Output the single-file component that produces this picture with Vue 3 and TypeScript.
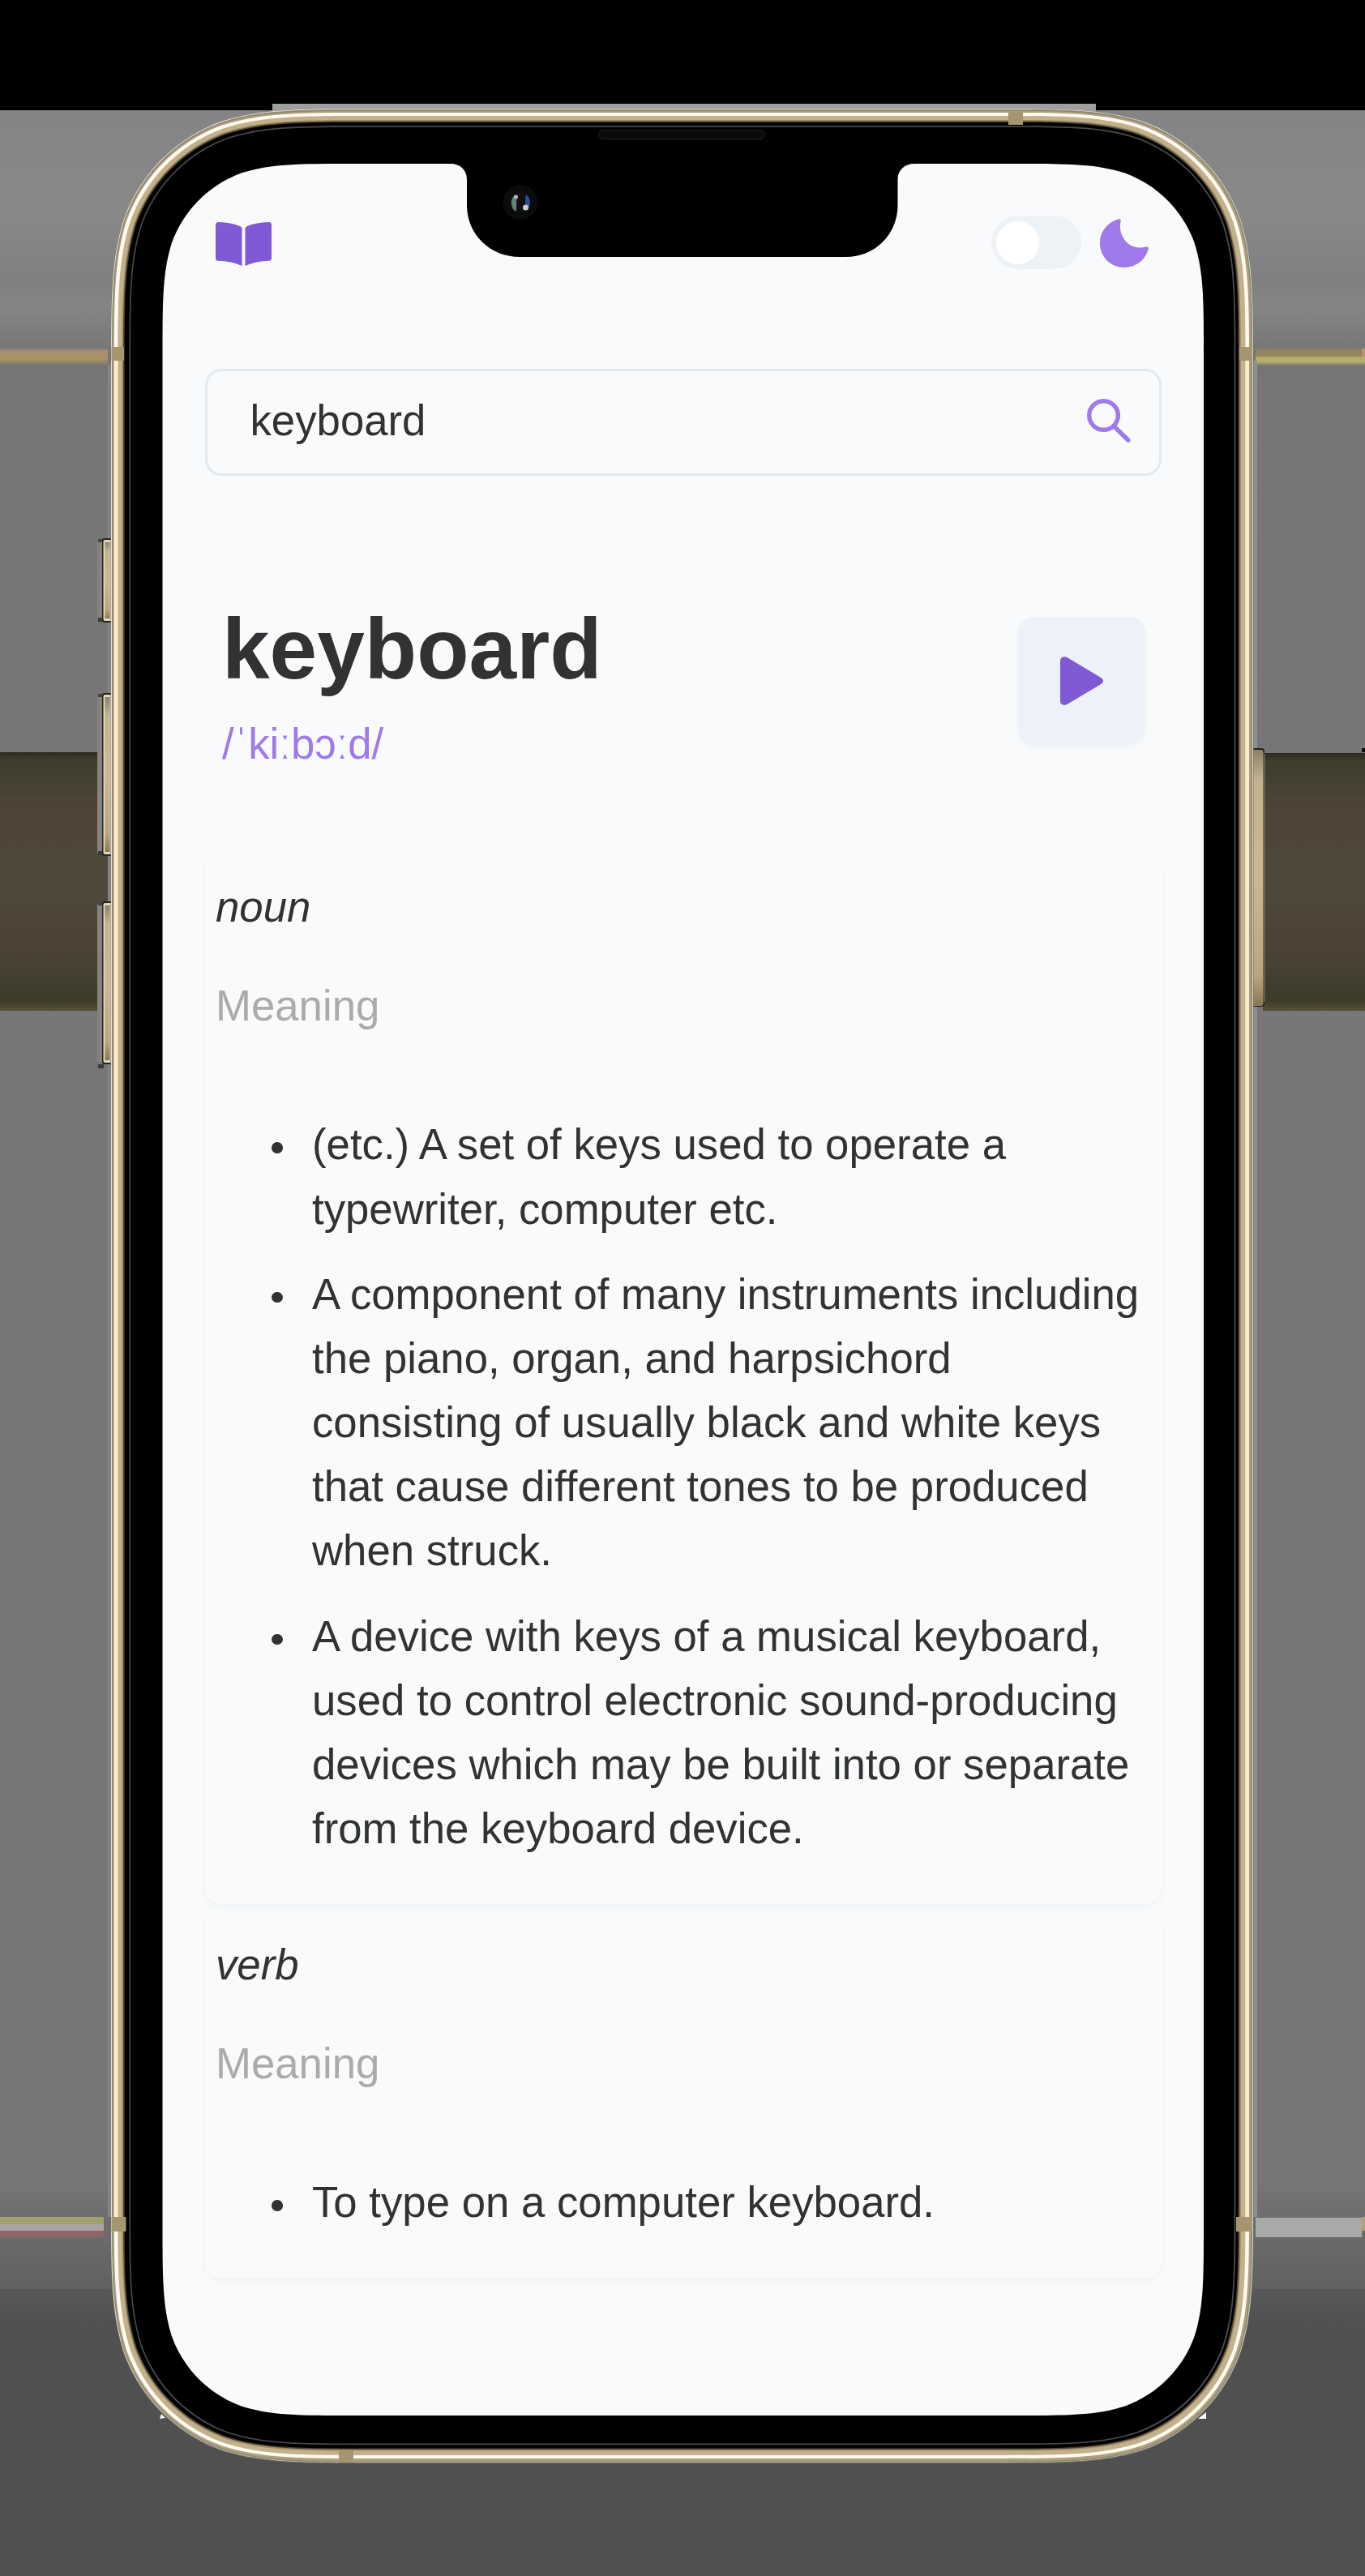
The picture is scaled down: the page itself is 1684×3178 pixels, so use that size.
<script setup lang="ts">
interface Entry {
  part: string
  meanings: string[][]
}

const word = 'keyboard'
const entries: Entry[] = [
  {
    part: 'noun',
    meanings: [
      ['(etc.) A set of keys used to operate a', 'typewriter, computer etc.'],
      [
        'A component of many instruments including',
        'the piano, organ, and harpsichord',
        'consisting of usually black and white keys',
        'that cause different tones to be produced',
        'when struck.',
      ],
      [
        'A device with keys of a musical keyboard,',
        'used to control electronic sound-producing',
        'devices which may be built into or separate',
        'from the keyboard device.',
      ],
    ],
  },
  { part: 'verb', meanings: [['To type on a computer keyboard.']] },
]

// Rounded rectangle with continuous-curvature corners.
function squircle(l: number, t: number, r: number, b: number, R: number): string {
  const a = 1.528665 * R
  const c1 = 1.08849 * R
  const c2 = 0.8684 * R
  const p = 0.63149 * R
  const q = 0.07491 * R
  const m = 0.37282 * R
  const n = 0.16906 * R
  return [
    `M${l + a} ${t}H${r - a}`,
    `C${r - c1} ${t} ${r - c2} ${t} ${r - p} ${t + q}`,
    `C${r - m} ${t + n} ${r - n} ${t + m} ${r - q} ${t + p}`,
    `C${r} ${t + c2} ${r} ${t + c1} ${r} ${t + a}`,
    `V${b - a}`,
    `C${r} ${b - c1} ${r} ${b - c2} ${r - q} ${b - p}`,
    `C${r - n} ${b - m} ${r - m} ${b - n} ${r - p} ${b - q}`,
    `C${r - c2} ${b} ${r - c1} ${b} ${r - a} ${b}`,
    `H${l + a}`,
    `C${l + c1} ${b} ${l + c2} ${b} ${l + p} ${b - q}`,
    `C${l + m} ${b - n} ${l + n} ${b - m} ${l + q} ${b - p}`,
    `C${l} ${b - c2} ${l} ${b - c1} ${l} ${b - a}`,
    `V${t + a}`,
    `C${l} ${t + c1} ${l} ${t + c2} ${l + q} ${t + p}`,
    `C${l + n} ${t + m} ${l + m} ${t + n} ${l + p} ${t + q}`,
    `C${l + c2} ${t} ${l + c1} ${t} ${l + a} ${t}Z`,
  ].join('')
}

const rings = [
  { d: squircle(136.5, 133.8, 1546.5, 3039, 214.5), fill: '#77756e' },
  { d: squircle(137, 134, 1546, 3038, 214), fill: '#e9e2d2' },
  { d: squircle(138, 135, 1545.2, 3037.6, 213), fill: '#8f8973' },
  { d: squircle(139.5, 137, 1543.5, 3036, 211.5), fill: '#ad9f7f' },
  { d: squircle(140.7, 139, 1541, 3033, 210), fill: '#fffaf0' },
  { d: squircle(145.3, 143, 1536.5, 3029, 206), fill: '#c2b18a' },
  { d: squircle(150.5, 148, 1530.8, 3023.5, 201), fill: '#9e8c69' },
  { d: squircle(152, 149.5, 1529.2, 3022, 199.5), fill: '#4d4331' },
  { d: squircle(153.6, 151, 1527.6, 3020.5, 198), fill: '#000' },
  { d: squircle(159.4, 155.3, 1524.4, 3016.2, 192), fill: '#4a494b' },
  { d: squircle(161, 157, 1522.6, 3014.4, 190.5), fill: '#000' },
  { d: squircle(200.5, 202, 1485, 2980, 154), fill: '#f9fafc' },
]

const sideKeys = [
  { y: 664, h: 104, foot: 0 },
  { y: 855, h: 201, foot: 0 },
  { y: 1112, h: 201, foot: 6 },
]
</script>

<template>
  <div class="stage">
    <svg class="device" viewBox="0 0 1684 3178" aria-hidden="true">
      <defs>
        <linearGradient id="backdrop" gradientUnits="userSpaceOnUse" x1="0" y1="136" x2="0" y2="3178">
          <stop offset="0" stop-color="#848484" />
          <stop offset="0.04" stop-color="#898989" />
          <stop offset="0.07" stop-color="#808080" />
          <stop offset="0.08" stop-color="#858585" />
          <stop offset="0.1" stop-color="#747474" />
          <stop offset="0.11" stop-color="#767676" />
          <stop offset="0.84" stop-color="#777777" />
          <stop offset="0.853" stop-color="#6e6e6e" />
          <stop offset="0.87" stop-color="#676767" />
          <stop offset="0.8835" stop-color="#616161" />
          <stop offset="0.8836" stop-color="#585858" />
          <stop offset="0.9" stop-color="#505050" />
          <stop offset="1" stop-color="#505050" />
        </linearGradient>
        <linearGradient id="brown" x1="0" y1="0" x2="0" y2="1">
          <stop offset="0" stop-color="#2b291e" />
          <stop offset="0.03" stop-color="#403d2e" />
          <stop offset="0.12" stop-color="#454132" />
          <stop offset="0.2" stop-color="#4e4436" />
          <stop offset="0.5" stop-color="#4f4838" />
          <stop offset="0.76" stop-color="#4c4234" />
          <stop offset="0.85" stop-color="#454131" />
          <stop offset="0.96" stop-color="#3d3a2b" />
          <stop offset="1" stop-color="#545039" />
        </linearGradient>
        <linearGradient id="goldLeft" x1="0" y1="0" x2="0" y2="1">
          <stop offset="0" stop-color="#777" />
          <stop offset="0.2" stop-color="#a88f79" />
          <stop offset="0.6" stop-color="#ab945b" />
          <stop offset="1" stop-color="#777" />
        </linearGradient>
        <linearGradient id="goldRight" x1="0" y1="0" x2="0" y2="1">
          <stop offset="0" stop-color="#777" />
          <stop offset="0.25" stop-color="#92835c" />
          <stop offset="0.5" stop-color="#94885c" />
          <stop offset="0.55" stop-color="#b3ae69" />
          <stop offset="0.8" stop-color="#b3ae69" />
          <stop offset="1" stop-color="#777" />
        </linearGradient>
        <linearGradient id="key" x1="0" y1="0" x2="0" y2="1">
          <stop offset="0" stop-color="#8e8069" />
          <stop offset="0.12" stop-color="#c4b38f" />
          <stop offset="0.5" stop-color="#cdb693" />
          <stop offset="0.88" stop-color="#bba580" />
          <stop offset="1" stop-color="#8a7853" />
        </linearGradient>
      </defs>

      <rect width="1684" height="3178" fill="#000" />
      <rect y="136" width="1684" height="3042" fill="url(#backdrop)" />
      <rect x="336" y="128" width="1016" height="10" fill="#9f9f9f" />

      <rect y="429" width="133" height="22" fill="url(#goldLeft)" />
      <rect x="1549" y="428" width="135" height="23" fill="url(#goldRight)" />
      <rect x="1680" y="430" width="4" height="10" fill="#b29571" />

      <rect y="928" width="135" height="319" fill="url(#brown)" />
      <rect x="1558" y="929" width="126" height="318" fill="url(#brown)" />
      <rect x="1680" y="923" width="4" height="5" fill="#111" />

      <rect y="2735" width="128" height="9" fill="#a0a16f" />
      <rect y="2744" width="128" height="8" fill="#aaa4a4" />
      <rect y="2752" width="128" height="8" fill="#8d6665" />
      <rect x="1549" y="2736" width="131" height="24" fill="#a9a9a9" />
      <rect x="1680" y="2735" width="4" height="17" fill="#b4a06f" />
      <path d="M1488 2976v8h-10zM197 2984l2-6 5 5z" fill="#fff" />

      <rect x="1546" y="445" width="5" height="2290" fill="#8d8f92" />
      <rect x="133" y="450" width="4" height="2285" fill="#858585" />

      <g v-for="k in sideKeys" :key="k.y">
        <rect x="120" :y="k.y + 3" width="7" :height="k.h - 6" fill="#85837c" />
        <rect x="121" :y="k.y + 1" width="8" height="4" fill="#444" />
        <rect x="121" :y="k.y + k.h - 6 + k.foot" width="7" height="5" fill="#3c3c3c" />
        <rect x="126" :y="k.y" width="14" :height="k.h" rx="3" fill="#26231b" />
        <rect x="127.5" :y="k.y + 2" width="12" :height="k.h - 4" rx="2" fill="#ded6bd" />
        <rect x="129.5" :y="k.y + 5" width="6" :height="k.h - 10" fill="url(#key)" />
      </g>
      <rect x="1544" y="923" width="16" height="319" rx="4" fill="#25211a" />
      <rect x="1544" y="925" width="14.5" height="316" rx="3" fill="url(#key)" />
      <rect x="1559.3" y="930" width="1" height="306" fill="#8b8c70" />

      <path v-for="(r, i) in rings" :key="i" :d="r.d" :fill="r.fill" />

      <rect x="141" y="445" width="4.3" height="2290" fill="#fcedcd" />
      <rect x="1536.7" y="445" width="4.3" height="2290" fill="#faebcb" />

      <g fill="#a6966f">
        <rect x="137.5" y="428" width="15.5" height="17" />
        <rect x="1529" y="428" width="16" height="17" />
        <rect x="137.5" y="2735" width="18" height="18" />
        <rect x="1525" y="2735" width="20" height="18" />
        <rect x="1244" y="138" width="18" height="16" />
        <rect x="418" y="3022" width="18" height="16" />
      </g>

      <path
        d="M556 200V202C568 202 576 210 576 221V253C576 289 604 317 642 317H1043C1080 317 1107.5 289 1107.5 253V221C1107.5 210 1116 202 1128 202V200Z"
        fill="#000"
      />
      <rect x="738.5" y="160.5" width="205" height="11" rx="5.5" fill="#0b0b0b" stroke="#202020" />
      <circle cx="642" cy="249.5" r="21.5" fill="#0a0c0c" />
      <circle cx="642" cy="249.5" r="13" fill="#141010" />
      <path d="M637 240c-8 3-8 16-1 21 2-2 1-18 1-21z" fill="#61837b" />
      <path d="M649 240c6 4 6 13 2 18-4-3-3-13-2-18z" fill="#24539b" />
      <circle cx="636.500" cy="243" r="2.500" fill="#a7bdb5" />
      <circle cx="648.500" cy="256" r="3.500" fill="#c9cbd9" />
    </svg>

    <main class="screen">
      <header class="topbar">
        <svg class="book" viewBox="0 0 69 54">
          <path d="M3.500 0Q19 .3 30.500 5.300Q32.500 6.200 32.500 8.500V54Q20 48 3 47.700Q0 47.500 0 44.500V3.500Q0 0 3.500 0Z" />
          <path d="M65.500 0Q50 .3 38.500 5.300Q36.500 6.200 36.500 8.500V54Q49 48 66 47.700Q69 47.500 69 44.500V3.500Q69 0 65.500 0Z" />
        </svg>
        <div class="theme">
          <div class="toggle"><span class="knob"></span></div>
          <svg class="moon" viewBox="0 0 60 60">
            <path d="M22.500 .5C25 -.3 26 .8 25.500 3.200C22 20 34 36.500 50 35.500C53 35.300 55 34.600 57 34.400C59.500 34.200 60.300 35.300 59.600 37.600C56 51 44 60 30.500 60C13 60 0 47 0 30C0 16 9 4.500 22.500 .5Z" />
          </svg>
        </div>
      </header>

      <div class="search">
        <span>{{ word }}</span>
        <svg class="lens" viewBox="0 0 54 54">
          <circle cx="20.500" cy="20.500" r="17.800" />
          <path d="M33.500 34L50.800 51" />
        </svg>
      </div>

      <section class="headword">
        <div>
          <h1>{{ word }}</h1>
          <p class="phonetic">/ˈkiːbɔːd/</p>
        </div>
        <button class="play" type="button" aria-label="Play">
          <svg viewBox="0 0 53 60">
            <path d="M0 5Q0 2 2.500 .8Q5 -.5 8 .8L49.500 25.500Q53 27.500 53 30Q53 32.500 49.500 34.500L8 59.200Q5 60.500 2.500 59.200Q0 58 0 55Z" />
          </svg>
        </button>
      </section>

      <section class="cards">
        <article v-for="entry in entries" :key="entry.part" class="card">
          <p class="part">{{ entry.part }}</p>
          <p class="label">Meaning</p>
          <ul>
            <li v-for="(lines, i) in entry.meanings" :key="i">
              <span class="dot"></span>
              <div>
                <div v-for="line in lines" :key="line" class="line">{{ line }}</div>
              </div>
            </li>
          </ul>
        </article>
      </section>
    </main>
  </div>
</template>

<style>
body {
  margin: 0;
  background: #505050;
}
</style>

<style scoped>
.stage {
  position: relative;
  width: 1684px;
  height: 3178px;
  overflow: hidden;
  box-sizing: border-box;
  padding-top: 266px;
  font-family: 'Liberation Sans', Arial, sans-serif;
  font-size: 52.74px;
  line-height: 79.05px;
  color: #303233;
}
.device {
  position: absolute;
  inset: 0;
  width: 1684px;
  height: 3178px;
}
.screen {
  position: relative;
  width: 1180px;
  margin-left: 253px;
}
p,
h1,
ul {
  margin: 0;
  padding: 0;
}
.topbar {
  display: flex;
  justify-content: space-between;
  align-items: flex-start;
  height: 66px;
  padding: 0 16px 0 13px;
}
.book {
  width: 69px;
  height: 54px;
  margin-top: 8px;
  fill: #805ad5;
}
.theme {
  display: flex;
  gap: 23px;
}
.toggle {
  box-sizing: border-box;
  width: 111px;
  height: 66px;
  padding: 6.500px;
  border-radius: 33px;
  background: #edf2f7;
}
.knob {
  display: block;
  width: 53px;
  height: 53px;
  margin-left: -0.5px;
  border-radius: 50%;
  background: #fff;
}
.moon {
  width: 60px;
  height: 60px;
  margin-top: 4px;
  fill: #9f7aea;
}
.search {
  display: flex;
  justify-content: space-between;
  align-items: center;
  box-sizing: border-box;
  height: 132px;
  margin-top: 122.500px;
  padding: 0 35.500px 4px 52.500px;
  border: 3px solid #e4e9ec;
  border-radius: 20px;
}
.lens {
  width: 54px;
  height: 54px;
  fill: none;
  stroke: #9f7aea;
  stroke-width: 5.4;
  stroke-linecap: round;
}
.headword {
  display: flex;
  justify-content: space-between;
  align-items: flex-start;
  margin-top: 151.500px;
  padding: 0 20px 0 21px;
  height: 313px;
}
.headword h1 {
  font-size: 105.4px;
  line-height: 126px;
  font-weight: 700;
}
.phonetic {
  color: #9f7aea;
  margin-top: 14px;
}
.play {
  display: flex;
  align-items: center;
  justify-content: center;
  width: 157px;
  height: 158px;
  margin-top: 23px;
  padding: 0;
  border: 0;
  border-radius: 20px;
  background: #edf2f8;
  box-shadow: 0 3px 7px rgba(0, 0, 0, 0.03);
}
.play svg {
  width: 53px;
  height: 60px;
  fill: #805ad5;
  margin-right: 1px;
}
.cards {
  display: flex;
  flex-direction: column;
  gap: 7.300px;
}
.card {
  padding: 28px 13px 54px;
  border-radius: 20px;
  box-shadow: 0 3px 7px rgba(20, 60, 60, 0.045);
}
.part {
  font-style: italic;
}
.label {
  margin-top: 43.400px;
  color: #ababac;
}
ul {
  display: flex;
  flex-direction: column;
  gap: 26.350px;
  margin-top: 92px;
  list-style: none;
}
li {
  display: flex;
  padding-left: 69px;
}
.dot {
  flex: none;
  width: 13.500px;
  height: 13.500px;
  margin: 37px 36.500px 0 0;
  border-radius: 50%;
  background: #303233;
}
.line {
  white-space: nowrap;
}
</style>
